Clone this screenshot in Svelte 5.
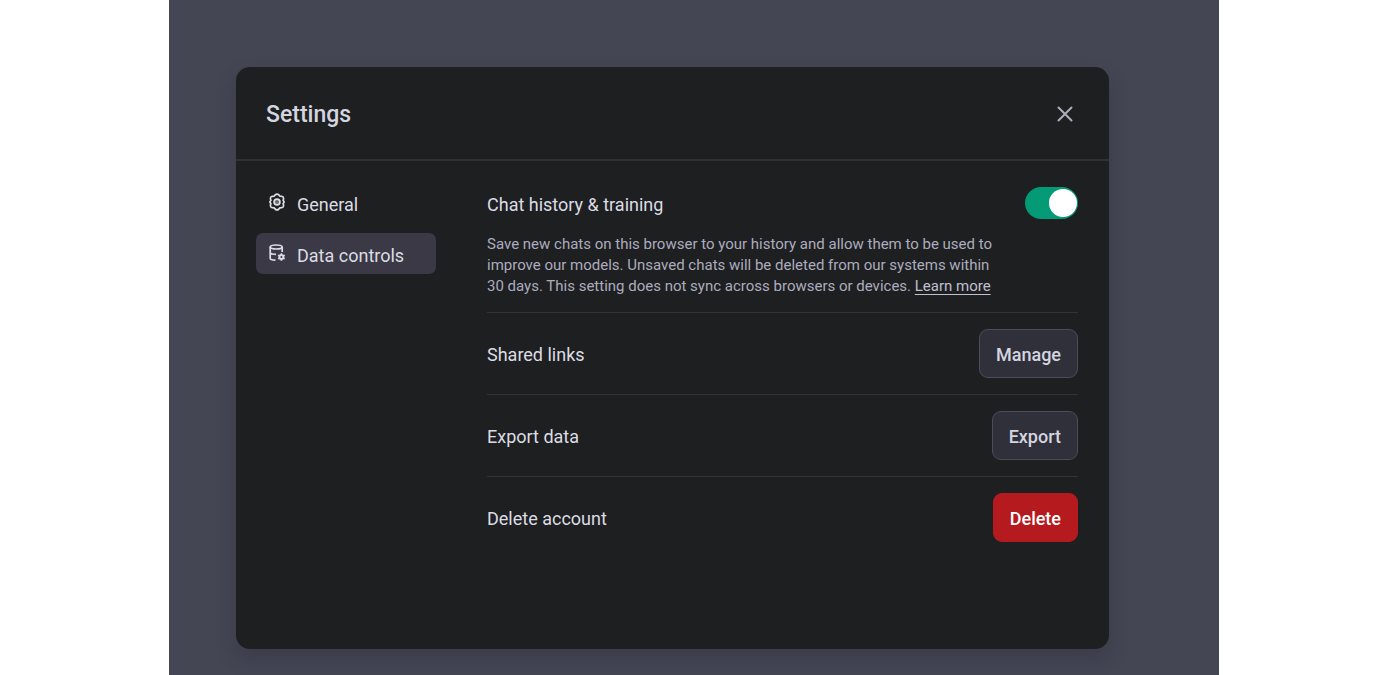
<script>
  let historyOn = $state(true);
  let active = $state('data');
  const actions = [
    { title: 'Shared links', label: 'Manage', kind: 'neutral' },
    { title: 'Export data', label: 'Export', kind: 'neutral' },
    { title: 'Delete account', label: 'Delete', kind: 'danger' }
  ];
</script>

<main class="stage">
  <section class="dialog" role="dialog" aria-labelledby="dialog-title">
    <header class="head">
      <h1 id="dialog-title">Settings</h1>
      <button class="close" type="button" aria-label="Close">
        <svg width="18" height="18" viewBox="0 0 18 18" fill="none" stroke="currentColor" stroke-width="2" stroke-linecap="round">
          <path d="M2.500 2.500l13 13M15.500 2.500l-13 13" />
        </svg>
      </button>
    </header>

    <div class="body">
      <nav class="tabs">
        <button type="button" class="tab" class:active={active === 'general'} onclick={() => (active = 'general')}>
          <svg width="18" height="18" viewBox="0 0 18 18" fill="none" stroke="currentColor" stroke-width="1.7" stroke-linejoin="round">
            <path d="M7.300 1.700Q9 .400 10.700 1.700L11.700 3.100L13.800 3.300Q15.700 3.800 15.600 5.700L15.100 7.300L16.100 9L15.100 10.700L15.600 12.300Q15.700 14.200 13.800 14.700L11.700 14.900L10.700 16.300Q9 17.600 7.300 16.300L6.300 14.900L4.200 14.700Q2.300 14.200 2.400 12.300L2.900 10.700L1.900 9L2.900 7.300L2.400 5.700Q2.300 3.800 4.200 3.300L6.300 3.100Z" />
            <circle cx="9" cy="9" r="2.900" fill="currentColor" fill-opacity="0.4" />
          </svg>
          <span>General</span>
        </button>
        <button type="button" class="tab" class:active={active === 'data'} onclick={() => (active = 'data')}>
          <svg width="18" height="18" viewBox="0 0 18 18" fill="none" stroke="currentColor" stroke-width="1.700">
            <ellipse cx="8.200" cy="3" rx="6" ry="2" />
            <path d="M2.200 3v11.200c0 1.100 2 1.900 5.300 2M14.200 3v5M2.200 8.600c.4 1 2.600 1.700 5.800 1.800" />
            <circle cx="13.400" cy="13" r="2" stroke-width="2" />
            <path d="M13.400 9.200v2M13.400 14.800v2M10.100 11.100l1.700 1M15 13.900l1.700 1M10.100 14.900l1.700-1M15 12.100l1.700-1" stroke-width="1.600" />
          </svg>
          <span>Data controls</span>
        </button>
      </nav>

      <div class="panel">
        <div class="history">
          <div class="line">
            <label for="history">Chat history &amp; training</label>
            <input id="history" class="switch" type="checkbox" role="switch" bind:checked={historyOn} />
          </div>
          <p>
            Save new chats on this browser to your history and allow them to be used to improve our
            models. Unsaved chats will be deleted from our systems within 30 days. This setting does
            not sync across browsers or devices. <a href="#learn-more">Learn more</a>
          </p>
        </div>
        {#each actions as action}
          <div class="row">
            <span>{action.title}</span>
            <button type="button" class="btn {action.kind}">{action.label}</button>
          </div>
        {/each}
      </div>
    </div>
  </section>
</main>

<style>
  :global(body) {
    background: #fff;
  }
  .stage {
    box-sizing: border-box;
    display: flex;
    max-width: 1050px;
    min-height: 100vh;
    margin: 0 auto;
    padding: 67px 110px 26px 67px;
    background: #444654;
    color: #dcdce4;
    font: 18px/24px Roboto, sans-serif;
  }
  .dialog {
    flex: 1;
    border-radius: 14px;
    background: #1e1f21;
    box-shadow: 0 10px 20px rgba(32, 22, 36, 0.2);
  }
  .head {
    display: flex;
    align-items: center;
    justify-content: space-between;
    padding: 32px 31px 30px 30px;
    border-bottom: 2px solid #303134;
  }
  h1 {
    margin: 0;
    padding-top: 2px;
    color: #d5d5e0;
    font-size: 23px;
    font-weight: 500;
    line-height: 28px;
  }
  button {
    font: inherit;
    cursor: pointer;
  }
  .close {
    display: flex;
    padding: 4px;
    border: 0;
    background: none;
    color: #acacbe;
  }
  .body {
    display: flex;
    gap: 51px;
    padding: 21px 31px 31px 20px;
  }
  .tabs {
    display: flex;
    flex: 0 0 180px;
    flex-direction: column;
    gap: 10px;
  }
  .tab {
    display: flex;
    align-items: center;
    gap: 11px;
    padding: 11px 12px 6px;
    border: 0;
    border-radius: 7px;
    background: none;
    color: #dcdce4;
    text-align: left;
  }
  .tab svg {
    margin-bottom: 6px;
  }
  .tab.active {
    background: #3a3945;
  }
  .panel {
    flex: 1;
    min-width: 0;
  }
  .history {
    padding: 5px 0 15px;
  }
  .line,
  .row {
    display: flex;
    align-items: center;
    justify-content: space-between;
  }
  .line label,
  .row span {
    padding-top: 3px;
  }
  .switch {
    display: flex;
    align-items: center;
    box-sizing: border-box;
    width: 53px;
    height: 32px;
    margin: 0;
    padding: 0 1px;
    border-radius: 16px;
    appearance: none;
    background: #55565f;
    cursor: pointer;
  }
  .switch::before {
    width: 28px;
    height: 28px;
    border-radius: 50%;
    background: #fff;
    content: '';
  }
  .switch:checked {
    justify-content: flex-end;
    background: #049a75;
  }
  p {
    max-width: 520px;
    margin: 15px 0 0;
    color: #acacbe;
    font-size: 15px;
    line-height: 21px;
  }
  a {
    color: #c0c0d0;
    text-underline-offset: 3px;
  }
  .row {
    padding: 16px 0;
    border-top: 1px solid #323336;
  }
  .btn {
    padding: 13px 16px 10px;
    border: 1px solid #4b4c5c;
    border-radius: 9px;
    background: #2f303a;
    color: #d5d5e0;
    font-weight: 500;
    line-height: 24px;
  }
  .btn.danger {
    border-color: #b51b1e;
    background: #b51b1e;
    color: #fff;
  }
</style>
